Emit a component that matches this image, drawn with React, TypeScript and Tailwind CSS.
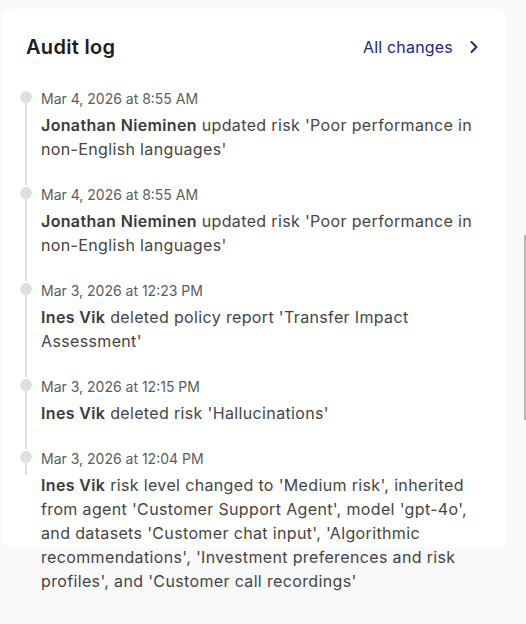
import React from "react";

type Entry = { date: string; name: string; text: string };

const entries: Entry[] = [
  {
    date: "Mar 4, 2026 at 8:55 AM",
    name: "Jonathan Nieminen",
    text: "updated risk 'Poor performance in non-English languages'",
  },
  {
    date: "Mar 4, 2026 at 8:55 AM",
    name: "Jonathan Nieminen",
    text: "updated risk 'Poor performance in non-English languages'",
  },
  {
    date: "Mar 3, 2026 at 12:23 PM",
    name: "Ines Vik",
    text: "deleted policy report 'Transfer Impact Assessment'",
  },
  {
    date: "Mar 3, 2026 at 12:15 PM",
    name: "Ines Vik",
    text: "deleted risk 'Hallucinations'",
  },
  {
    date: "Mar 3, 2026 at 12:04 PM",
    name: "Ines Vik",
    text: "risk level changed to 'Medium risk', inherited from agent 'Customer Support Agent', model 'gpt-4o', and datasets 'Customer chat input', 'Algorithmic recommendations', 'Investment preferences and risk profiles', and 'Customer call recordings'",
  },
];

export default function App() {
  return (
    <div
      className="relative min-h-[624px] w-[526px] bg-[#f9f9f9] pt-[9px] pl-[1px]"
      style={{ fontFamily: "Inter, 'Noto Sans', sans-serif" }}
    >
      <div className="h-[539px] w-[505px] rounded-[10px] bg-white pl-[19px] pr-[27px] pt-6">
        <div className="flex items-center justify-between pl-[6px]">
          <h2 className="text-[20px] leading-7 font-semibold tracking-[0.015em] text-[#1c1c1c]">Audit log</h2>
          <a className="flex items-center gap-4 text-base leading-6 tracking-[0.012em] text-[#24248c]">
            <span>All changes</span>
            <svg width="10" height="14" viewBox="0 0 10 14" fill="none">
              <path d="M2.5 2 L7.5 7 L2.5 12" stroke="#24248c" strokeWidth="2" strokeLinecap="round" strokeLinejoin="round" />
            </svg>
          </a>
        </div>
        <div className="mt-7 flex flex-col">
          {entries.map((e, i) => {
            const last = i === entries.length - 1;
            return (
              <div key={i} className="flex gap-[9px]">
                <div className="flex w-3 flex-col items-center">
                  <div className="mt-[2px] h-3 w-3 shrink-0 rounded-full bg-[#e0e0e0]" />
                  <div className={last ? "h-3 w-[2px] bg-[#e0e0e0]" : "w-[2px] flex-1 bg-[#e0e0e0]"} />
                </div>
                <div className={last ? "flex-1" : "flex-1 pb-6"}>
                  <div className="text-sm leading-5 text-[#5c5c5c]">{e.date}</div>
                  <p className="mt-1 text-base leading-6 tracking-[0.022em] text-[#444444]">
                    <span className="font-semibold text-[#3a3a3a]">{e.name}</span> {e.text}
                  </p>
                </div>
              </div>
            );
          })}
        </div>
      </div>
      <div className="absolute right-0 top-[235px] h-[185px] w-[2px] bg-[#b5b5b5]" />
    </div>
  );
}
